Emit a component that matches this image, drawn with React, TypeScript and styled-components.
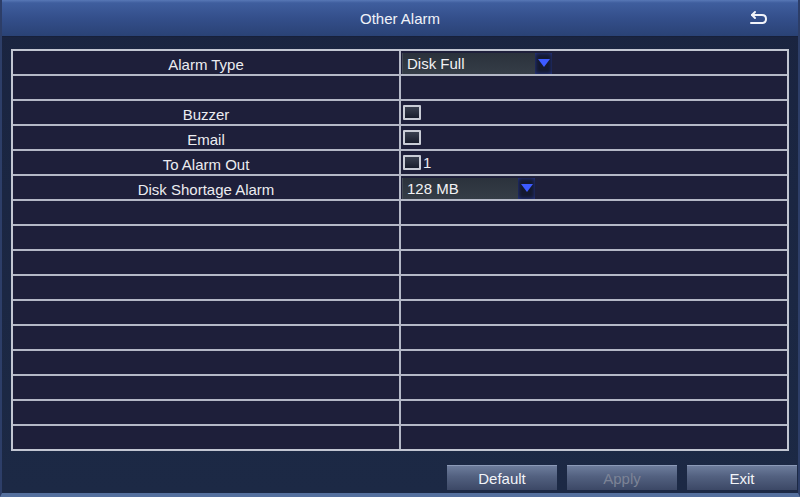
import React, { FC } from 'react';
import styled, { createGlobalStyle } from 'styled-components';

const GlobalStyle = createGlobalStyle`
    html, body {
        margin: 0;
        padding: 0;
        background: #1b2640;
        font-family: "Liberation Sans", Arial, sans-serif;
    }
`;

interface Row {
    label?: string;
    value?: React.ReactNode;
}

const Select: FC<{ text: string; width: number }> = (props) => {
    return (
        <SelectBox>
            <SelectText style={{ width: props.width }}>{props.text}</SelectText>
            <SelectArrow>
                <svg width="14" height="10" viewBox="0 0 14 10">
                    <polygon points="1,1 13,1 7,9" fill="#3d5bff" />
                </svg>
            </SelectArrow>
        </SelectBox>
    );
};

const Check: FC<{ label?: string }> = (props) => {
    return (
        <CheckWrap>
            <CheckBox />
            {props.label && <span>{props.label}</span>}
        </CheckWrap>
    );
};

const rows: Row[] = [
    { label: 'Alarm Type', value: <Select text="Disk Full" width={133} /> },
    {},
    { label: 'Buzzer', value: <Check /> },
    { label: 'Email', value: <Check /> },
    { label: 'To Alarm Out', value: <Check label="1" /> },
    { label: 'Disk Shortage Alarm', value: <Select text="128 MB" width={116} /> },
    {}, {}, {}, {}, {}, {}, {}, {}, {}, {},
];

const App: FC = () => {
    return (
        <Window>
            <GlobalStyle />
            <Header>
                <Title>Other Alarm</Title>
                <BackButton>
                    <svg width="20" height="16" viewBox="0 0 20 16" fill="none" stroke="#f2f4fa" strokeWidth="2" strokeLinecap="round" strokeLinejoin="round">
                        <path d="M4 5 H14 Q18 5 18 9 Q18 13 14 13 H3" />
                        <path d="M7 2 L4 5 L7 8" />
                    </svg>
                </BackButton>
            </Header>
            <Body>
                <Table>
                    {rows.map((row, index) => (
                        <TableRow key={index} last={index === rows.length - 1}>
                            <LabelCell>{row.label}</LabelCell>
                            <ValueCell>{row.value}</ValueCell>
                        </TableRow>
                    ))}
                </Table>
                <Footer>
                    <Button>Default</Button>
                    <Button disabled>Apply</Button>
                    <Button>Exit</Button>
                </Footer>
            </Body>
        </Window>
    );
};

const Window = styled.div`
    width: 800px;
    height: 497px;
    box-sizing: border-box;
    display: flex;
    flex-direction: column;
    background: linear-gradient(180deg, #1a2440 0%, #1c2945 100%);
    border-left: 2px solid #2d3e68;
    border-right: 2px solid #2d3e68;
    border-bottom: 4px solid #55709e;
    color: #ececf0;
    font-size: 15px;
    overflow: hidden;
`;

const Header = styled.div`
    height: 36px;
    flex-shrink: 0;
    position: relative;
    display: flex;
    align-items: center;
    justify-content: center;
    background: linear-gradient(180deg, #5878b6 0%, #3f5e9e 8%, #344f8b 50%, #2a4275 100%);
    border-bottom: 1px solid #17203a;
`;

const Title = styled.div`
    font-size: 15px;
    color: #f0f2f8;
`;

const BackButton = styled.div`
    position: absolute;
    right: 30px;
    top: 10px;
    display: flex;
`;

const Body = styled.div`
    flex: 1;
    display: flex;
    flex-direction: column;
    padding: 12px 9px 0 9px;
`;

const Table = styled.div`
    display: flex;
    flex-direction: column;
    border: 2px solid #c2c6d2;
    background: #1e1f3a;
`;

const TableRow = styled.div<{ last: boolean }>`
    display: grid;
    grid-template-columns: 388px 1fr;
    height: ${(props) => (props.last ? 23 : 25)}px;
    box-sizing: border-box;
    border-bottom: ${(props) => (props.last ? 'none' : '2px solid #b4b8c6')};
`;

const LabelCell = styled.div`
    display: flex;
    align-items: flex-end;
    justify-content: center;
    padding-bottom: 1px;
    border-right: 2px solid #b4b8c6;
    color: #ececf0;
`;

const ValueCell = styled.div`
    display: flex;
    align-items: center;
    padding-left: 1px;
`;

const SelectBox = styled.div`
    display: flex;
    height: 21px;
    margin-top: 1px;
`;

const SelectText = styled.div`
    box-sizing: border-box;
    padding-left: 4px;
    display: flex;
    align-items: center;
    background: linear-gradient(180deg, #2b323c 0%, #353d47 100%);
    border-left: 1px solid #444b55;
    color: #f2f2f4;
`;

const SelectArrow = styled.div`
    width: 17px;
    display: flex;
    align-items: center;
    justify-content: center;
    background: #151a2e;
    box-shadow: inset 0 0 4px rgba(60, 90, 255, 0.5);
`;

const CheckWrap = styled.div`
    display: flex;
    align-items: center;
    gap: 2px;
    padding-left: 1px;
    color: #ececf0;
`;

const CheckBox = styled.div`
    width: 14px;
    height: 11px;
    border: 2px solid #c9ccd6;
    border-radius: 1px;
    background: linear-gradient(180deg, #3a4050 0%, #181c2c 100%);
`;

const Footer = styled.div`
    display: flex;
    justify-content: flex-end;
    gap: 10px;
    padding-top: 14px;
    margin-right: -8px;
`;

const Button = styled.button`
    width: 110px;
    height: 25px;
    border: none;
    border-top: 1px solid #8c9ab8;
    padding: 0;
    font-family: "Liberation Sans", Arial, sans-serif;
    font-size: 15px;
    color: ${(props) => (props.disabled ? '#7c8396' : '#f2f4f8')};
    background: linear-gradient(180deg, #6d7c9c 0%, #52607f 45%, #3c4866 100%);
    cursor: pointer;
`;

export default App;
